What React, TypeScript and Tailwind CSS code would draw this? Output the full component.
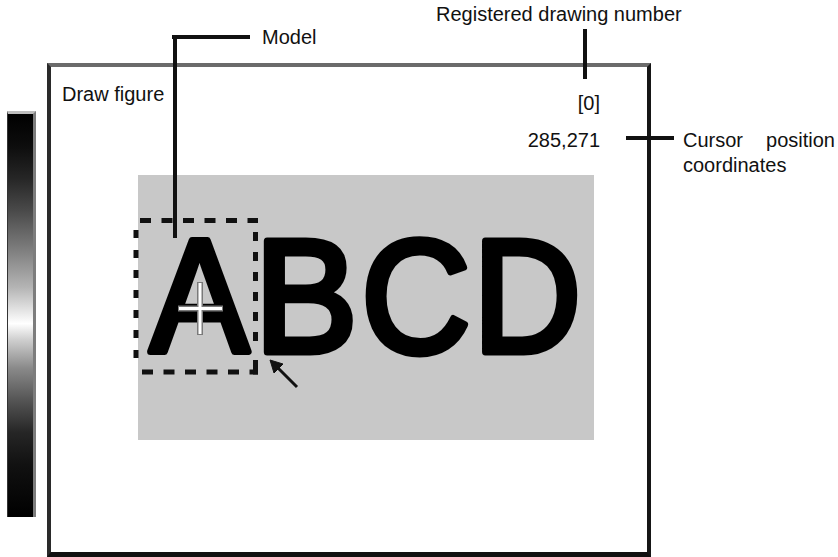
import React from "react";

function Scene() {
  return (
    <svg
      className="absolute left-0 top-0 overflow-visible"
      width={456}
      height={265}
      viewBox="138 175 456 265"
    >
      <g fill="#000" stroke="#000" strokeWidth={7} strokeLinejoin="round" fontFamily="'Liberation Sans', Arial, sans-serif" fontWeight={400} fontSize={161} textAnchor="middle">
        <text transform="translate(199.5 351.5) scale(0.92 1)">A</text>
        <text transform="translate(306 351.5) scale(0.96 1)">B</text>
        <text transform="translate(416 351.5) scale(0.94 1)">C</text>
        <text transform="translate(527 351.5) scale(0.93 1)">D</text>
      </g>
      {/* dashed model box */}
      <g stroke="#111" strokeWidth={5} fill="none">
        <line x1={140} y1={220.5} x2={258} y2={220.5} strokeDasharray="11 10.5" />
        <line x1={136} y1={230} x2={136} y2={368} strokeDasharray="8 12" />
        <line x1={142} y1={372} x2={258} y2={372} strokeDasharray="11 10.5" />
        <line x1={255.5} y1={232} x2={255.5} y2={352} strokeDasharray="9 11" />
        <line x1={255.5} y1={360} x2={255.5} y2={374.5} />
      </g>
      {/* crosshair */}
      <g strokeLinecap="butt">
        <line x1={178} y1={308.5} x2={223} y2={308.5} stroke="#7a7a7a" strokeWidth={6} />
        <line x1={200} y1={282} x2={200} y2={335} stroke="#7a7a7a" strokeWidth={6} />
        <line x1={179} y1={308.5} x2={222} y2={308.5} stroke="#fff" strokeWidth={3} />
        <line x1={200} y1={283} x2={200} y2={334} stroke="#fff" strokeWidth={3} />
      </g>
      {/* arrow cursor */}
      <g fill="#111" stroke="#111">
        <line x1={276} y1={366} x2={297} y2={387} strokeWidth={3} />
        <polygon points="270,360 283,364 274,373" strokeWidth={1} />
      </g>
    </svg>
  );
}

export default function App() {
  return (
    <div className="relative w-[838px] h-[557px] overflow-hidden bg-white text-[#111] font-['Liberation_Sans',Arial,sans-serif]">
      <div className="flex items-start pl-[7px]">
        {/* grey-scale bar */}
        <div className="mt-[111px] w-[29px] h-[406px] border-t-[3px] border-t-[#bdbdbd] border-r-[3px] border-r-[#7d7d7d] border-l border-l-[#333] bg-[linear-gradient(to_bottom,#000_0%,#0d0d0d_8%,#262626_16%,#4a4a4a_24%,#7a7a7a_33%,#b4b4b4_43%,#ffffff_52%,#cfcfcf_56%,#8a8a8a_63%,#555_71%,#262626_79%,#111_87%,#000_100%)]" />
        {/* monitor frame */}
        <div className="ml-[11px] mt-[63px] w-[604px] h-[494px] border-l-4 border-l-[#2a2a2a] border-t-4 border-t-[#6b6b6b] border-r-4 border-r-[#161616] border-b-[5px] border-b-[#111] bg-white">
          <div className="flex items-start justify-between text-[20px] leading-[20px]">
            <div className="ml-[11px] mt-[17px]">Draw figure</div>
            <div className="mt-[26px] pr-[47px] flex flex-col items-end gap-[17px]">
              <div>[0]</div>
              <div>285,271</div>
            </div>
          </div>
          <div className="relative ml-[87px] mt-[25px] w-[456px] h-[265px] bg-[#c8c8c8]">
            <Scene />
          </div>
        </div>
      </div>

      {/* callout: Model */}
      <div className="absolute left-[172px] top-[35px] w-[78px] h-[4px] bg-[#111]" />
      <div className="absolute left-[173px] top-[35px] w-[4px] h-[203px] bg-[#111]" />
      <div className="absolute left-[262px] top-[27px] text-[20px] leading-[20px]">Model</div>

      {/* callout: Registered drawing number */}
      <div className="absolute left-[436px] top-[4px] text-[20px] leading-[20px] whitespace-nowrap">Registered drawing number</div>
      <div className="absolute left-[583px] top-[29px] w-[4px] h-[50px] bg-[#111]" />

      {/* callout: Cursor position coordinates */}
      <div className="absolute left-[626px] top-[136px] w-[48px] h-[4px] bg-[#111]" />
      <div className="absolute left-[683px] top-[128px] w-[152px] text-[20px] leading-[25px] text-justify">
        Cursor position coordinates
      </div>
    </div>
  );
}
